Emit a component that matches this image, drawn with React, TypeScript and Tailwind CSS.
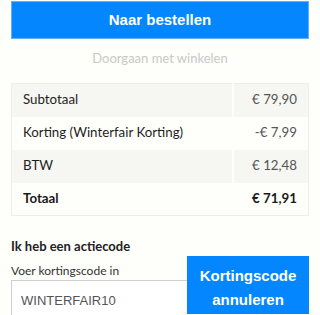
const rows = [
  { label: 'Subtotaal', value: '€ 79,90', shade: true },
  { label: 'Korting (Winterfair Korting)', value: '-€ 7,99', shade: false },
  { label: 'BTW', value: '€ 12,48', shade: true },
];

export default function App() {
  return (
    <div className="h-[315px] overflow-hidden bg-[#fefefb] px-[11px] pt-px font-['Lato',sans-serif]">
      <button
        type="button"
        className="block h-[38px] w-full border border-[#5fb0ff] bg-[#0486ff] font-['Liberation_Sans',Arial,sans-serif] text-[15px] font-bold text-white"
      >
        Naar bestellen
      </button>

      <div className="pt-[8px] pb-[14px] text-center text-[13px] leading-[22px] text-[#c9c9c7]">
        Doorgaan met winkelen
      </div>

      <table className="w-full border-collapse border border-[#eeeeea] text-[13.3px]">
        <tbody>
          {rows.map((r) => (
            <tr key={r.label} className={r.shade ? 'bg-[#f6f6f3]' : ''}>
              <td className="h-[33px] border-r-2 border-[#fefefb] pl-[11px] text-[#1f1f1f]">{r.label}</td>
              <td className="w-[76px] pr-[11px] text-right text-[#555]">{r.value}</td>
            </tr>
          ))}
          <tr>
            <td className="h-[33px] pl-[11px] font-bold text-[#1a1a1a]">Totaal</td>
            <td className="pr-[11px] text-right font-bold text-[#1a1a1a]">€ 71,91</td>
          </tr>
        </tbody>
      </table>

      <div className="pt-[20px] text-[13px] font-bold leading-[20px] text-[#222]">Ik heb een actiecode</div>

      <div className="flex">
        <div className="w-[176px] pt-[5px]">
          <div className="text-[12px] leading-[19px] text-[#333]">Voer kortingscode in</div>
          <input
            readOnly
            value="WINTERFAIR10"
            className="h-[40px] w-full border border-r-0 border-[#cfcfcc] bg-white px-[9px] font-['Liberation_Sans',Arial,sans-serif] text-[13px] text-[#555] outline-none"
          />
        </div>
        <button
          type="button"
          className="h-[58px] flex-1 bg-[#0486ff] pt-[6px] font-['Liberation_Sans',Arial,sans-serif] text-[15px] font-bold leading-[24px] text-white"
        >
          Kortingscode
          <br />
          annuleren
        </button>
      </div>
    </div>
  );
}
